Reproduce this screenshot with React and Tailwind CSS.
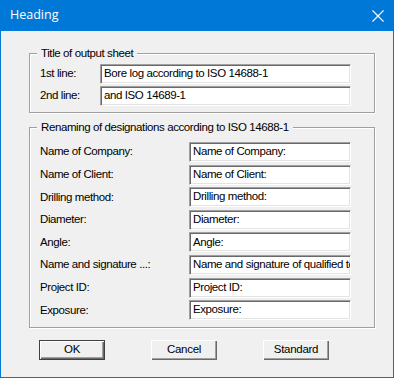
const font = { fontFamily: '"Liberation Sans", Arial, sans-serif' };

const titleRows = [
  ['1st line:', 'Bore log according to ISO 14688-1'],
  ['2nd line:', 'and ISO 14689-1'],
];

const renameRows = [
  ['Name of Company:', 'Name of Company:'],
  ['Name of Client:', 'Name of Client:'],
  ['Drilling method:', 'Drilling method:'],
  ['Diameter:', 'Diameter:'],
  ['Angle:', 'Angle:'],
  ['Name and signature ...:', 'Name and signature of qualified technician'],
  ['Project ID:', 'Project ID:'],
  ['Exposure:', 'Exposure:'],
];

const Field = ({ value, w }) => (
  <div
    className={`${w} h-[20px] bg-white border border-t-[#a0a0a0] border-l-[#a0a0a0] border-b-white border-r-white shadow-[inset_1px_1px_0_#696969,inset_-1px_-1px_0_#e3e3e3] flex items-center pl-[3px] overflow-hidden whitespace-nowrap text-[11.5px] tracking-[-0.4px] leading-none`}
  >
    {value}
  </div>
);

const Group = ({ title, className, children }) => (
  <div className={`relative border border-[#a0a0a0] shadow-[1px_1px_0_#fff,inset_1px_1px_0_#fff] ${className}`}>
    <span className="absolute -top-[8px] left-[7px] bg-[#f0f0f0] px-[4px] text-[11.5px] tracking-[-0.4px] leading-[14px]">{title}</span>
    {children}
  </div>
);

const Button = ({ label, primary }) => (
  <button
    className={`w-[66px] h-[20px] bg-[#f0f0f0] text-[11.5px] tracking-[-0.3px] leading-none ${
      primary
        ? 'border border-[#404040] shadow-[inset_1px_1px_0_#fff,inset_-1px_-1px_0_#696969,inset_-2px_-2px_0_#a0a0a0]'
        : 'shadow-[inset_1px_1px_0_#fff,inset_-1px_-1px_0_#696969,inset_-2px_-2px_0_#a0a0a0]'
    }`}
  >
    {label}
  </button>
);

export default function App() {
  return (
    <div className="w-[394px] h-[378px] bg-[#f0f0f0] border-x border-b border-[#0078d7] text-black flex flex-col" style={font}>
      {/* title bar */}
      <div className="h-[31px] -mx-px bg-[#0078d7] flex items-center justify-between pl-[10px] pr-[10px] text-white">
        <span className="text-[12.5px]" style={{ fontFamily: '"Open Sans", "Noto Sans", sans-serif' }}>Heading</span>
        <svg width="12" height="12" viewBox="0 0 12 12">
          <path d="M0.5 0.5 L11.5 11.5 M11.5 0.5 L0.5 11.5" stroke="#fff" strokeWidth="1.1" fill="none" />
        </svg>
      </div>

      <div className="pl-[28px] pr-[18px] pt-[22px]">
        <Group title="Title of output sheet" className="h-[60px] pt-[10px]">
          <div className="flex flex-col gap-[2px]">
            {titleRows.map(([label, value]) => (
              <div key={label} className="flex items-center">
                <span className="w-[70px] pl-[10px] text-[11.5px] tracking-[-0.4px]">{label}</span>
                <Field value={value} w="w-[251px]" />
              </div>
            ))}
          </div>
        </Group>

        <Group title="Renaming of designations according to ISO 14688-1" className="mt-[14px] h-[201px] pt-[14px]">
          <div className="flex flex-col gap-[2.6px]">
            {renameRows.map(([label, value]) => (
              <div key={label} className="flex items-center">
                <span className="w-[159px] pl-[10px] text-[11.5px] tracking-[-0.4px]">{label}</span>
                <Field value={value} w="w-[162px]" />
              </div>
            ))}
          </div>
        </Group>

        <div className="flex pl-[10px] gap-[46px] mt-[12px]">
          <Button label="OK" primary />
          <Button label="Cancel" />
          <Button label="Standard" />
        </div>
      </div>
    </div>
  );
}
